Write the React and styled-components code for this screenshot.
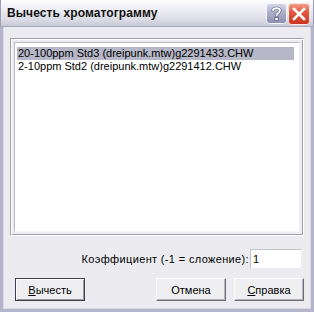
import styled, { createGlobalStyle } from "styled-components"

const Global = createGlobalStyle`
  html, body { margin: 0; padding: 0; background: #ffffff; }
  body { font-family: "Liberation Sans", Arial, sans-serif; }
`

const Window = styled.div`
  width: 314px;
  height: 312px;
  box-sizing: border-box;
  display: flex;
  flex-direction: column;
  background: #ececf0;
`

const TitleBar = styled.div`
  height: 27px;
  box-sizing: border-box;
  display: flex;
  align-items: center;
  padding: 0 3px 0 6px;
  background: linear-gradient(#fdfdfe 0%, #eeeef4 35%, #dcdce6 75%, #c9c9d6 100%);
  border-left: 1px solid #9c9cb2;
  border-right: 1px solid #9c9cb2;
  border-bottom: 1px solid #a6a6bc;
`

const Title = styled.div`
  flex: 1;
  font-size: 12px;
  font-weight: bold;
  color: #111;
  letter-spacing: 0.1px;
`

const Caps = styled.div`
  display: flex;
  gap: 1px;
  margin-top: 2px;
`

const Body = styled.div`
  flex: 1;
  display: flex;
  flex-direction: column;
  border: 3px solid #b4b4ca;
  border-top: none;
  box-shadow: inset 1px 0 #d8d8e4, inset -1px 0 #d8d8e4, inset 0 -1px #d8d8e4;
  padding: 11px 7px 7px 7px;
`

const Frame = styled.div`
  height: 198px;
  box-sizing: border-box;
  border: 1px solid;
  border-color: #a0a0ac #ffffff #ffffff #a0a0ac;
  box-shadow: inset 1px 1px #ffffff, inset -1px -1px #a0a0ac;
  padding: 3px;
  display: flex;
`

const List = styled.div`
  flex: 1;
  background: #ffffff;
  border: 1px solid;
  border-color: #b8b8c4 #f4f4f8 #f4f4f8 #b8b8c4;
  padding: 4px 5px 0 2px;
`

const Item = styled.div`
  height: 13px;
  line-height: 13px;
  font-size: 11px;
  color: #000;
  padding-left: 1px;
  white-space: nowrap;
  background: ${p => (p.$selected ? "#b6b7c7" : "transparent")};
`

const CoefRow = styled.div`
  display: flex;
  justify-content: flex-end;
  align-items: center;
  margin-top: 13px;
  padding-right: 2px;
`

const Label = styled.span`
  font-size: 11px;
  color: #000;
  letter-spacing: 0.35px;
  margin-right: 1px;
`

const Input = styled.div`
  width: 52px;
  height: 20px;
  box-sizing: border-box;
  background: #ffffff;
  border: 1px solid;
  border-color: #c4c4cc #eaeaee #eaeaee #c4c4cc;
  font-size: 11px;
  line-height: 18px;
  padding-left: 2px;
`

const ButtonRow = styled.div`
  display: flex;
  margin-top: 9px;
  padding-left: 5px;
  gap: 8px;
`

const Button = styled.div`
  width: 70px;
  height: 23px;
  box-sizing: border-box;
  display: flex;
  align-items: center;
  justify-content: center;
  font-size: 11px;
  color: #000;
  background: #efeff2;
  border: 1px solid;
  border-color: ${p => (p.$default ? "#404048" : "#ffffff #6e6e78 #6e6e78 #ffffff")};
  box-shadow: ${p =>
    p.$default
      ? "inset 1px 1px #ffffff, inset -1px -1px #9a9aa4"
      : "inset -1px -1px #b4b4bc"};
  margin-left: ${p => (p.$push ? "auto" : "0")};
  u { text-decoration: underline; }
`

function HelpIcon() {
  return (
    <svg width="21" height="21" viewBox="0 0 21 21">
      <defs>
        <linearGradient id="hg" x1="0" y1="0" x2="0" y2="1">
          <stop offset="0" stopColor="#d6d8ec" />
          <stop offset="0.5" stopColor="#a8acc8" />
          <stop offset="1" stopColor="#8c90b0" />
        </linearGradient>
      </defs>
      <rect x="0.5" y="0.5" width="20" height="20" rx="3" fill="url(#hg)" stroke="#f4f4fa" />
      <path
        d="M7 7.5 C7 4.5 14 4.5 14 7.5 C14 10 10.5 10 10.5 12.5"
        fill="none"
        stroke="#5a5e7c"
        strokeWidth="3.2"
        strokeLinecap="round"
      />
      <path
        d="M7 7.5 C7 4.5 14 4.5 14 7.5 C14 10 10.5 10 10.5 12.5"
        fill="none"
        stroke="#ffffff"
        strokeWidth="1.8"
        strokeLinecap="round"
      />
      <rect x="8.8" y="14.5" width="3.4" height="3.2" fill="#ffffff" stroke="#5a5e7c" strokeWidth="0.8" />
    </svg>
  )
}

function CloseIcon() {
  return (
    <svg width="22" height="22" viewBox="0 0 22 22">
      <defs>
        <linearGradient id="cg" x1="0" y1="0" x2="0" y2="1">
          <stop offset="0" stopColor="#f4a08c" />
          <stop offset="0.4" stopColor="#e45a40" />
          <stop offset="1" stopColor="#c8321e" />
        </linearGradient>
      </defs>
      <rect x="0.5" y="0.5" width="21" height="21" rx="3" fill="url(#cg)" stroke="#fbe8e4" />
      <path d="M6 6 L16 16 M16 6 L6 16" stroke="#ffffff" strokeWidth="2.6" strokeLinecap="square" />
    </svg>
  )
}

export default function App() {
  return (
    <>
      <Global />
      <Window>
        <TitleBar>
          <Title>Вычесть хроматограмму</Title>
          <Caps>
            <HelpIcon />
            <CloseIcon />
          </Caps>
        </TitleBar>
        <Body>
          <Frame>
            <List>
              <Item $selected>20-100ppm Std3 (dreipunk.mtw)g2291433.CHW</Item>
              <Item>2-10ppm Std2 (dreipunk.mtw)g2291412.CHW</Item>
            </List>
          </Frame>
          <CoefRow>
            <Label>Коэффициент (-1 = сложение):</Label>
            <Input>1</Input>
          </CoefRow>
          <ButtonRow>
            <Button $default>
              <span><u>В</u>ычесть</span>
            </Button>
            <Button $push>Отмена</Button>
            <Button>
              <span><u>С</u>правка</span>
            </Button>
          </ButtonRow>
        </Body>
      </Window>
    </>
  )
}
